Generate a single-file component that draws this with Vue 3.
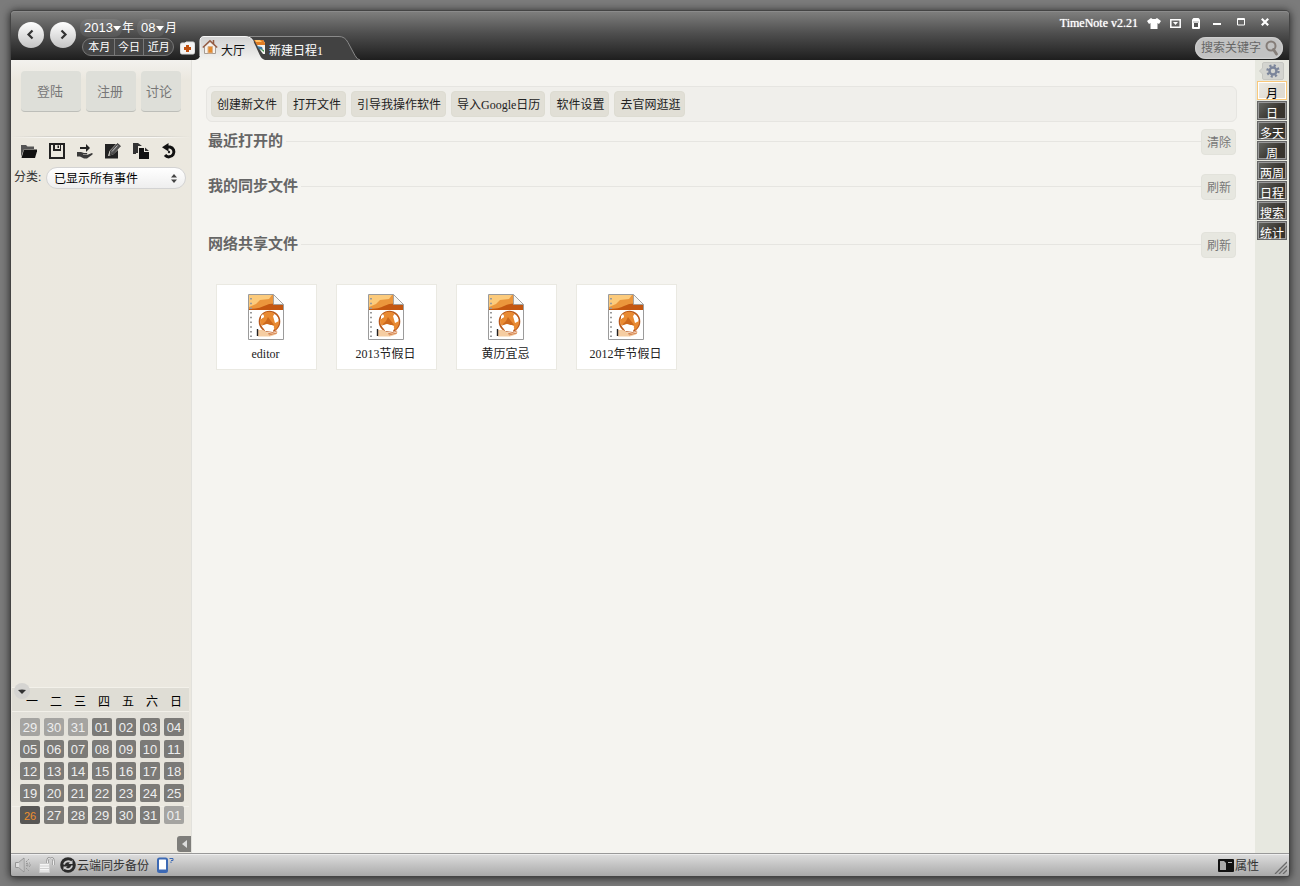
<script setup>
import { ref } from 'vue'

const weekdays = ['一', '二', '三', '四', '五', '六', '日']
const weeks = [
  ['29', '30', '31', '01', '02', '03', '04'],
  ['05', '06', '07', '08', '09', '10', '11'],
  ['12', '13', '14', '15', '16', '17', '18'],
  ['19', '20', '21', '22', '23', '24', '25'],
  ['26', '27', '28', '29', '30', '31', '01'],
]
const dayClass = (row, col) => ({
  outside: (row === 0 && col < 3) || (row === 4 && col === 6),
  today: row === 4 && col === 0,
})

const actions = ['创建新文件', '打开文件', '引导我操作软件', '导入Google日历', '软件设置', '去官网逛逛']
const files = ['editor', '2013节假日', '黄历宜忌', '2012年节假日']
const views = ['月', '日', '多天', '周', '两周', '日程', '搜索', '统计']
const activeView = ref('月')
const keyword = ref('')
</script>

<template>
  <div class="window">
    <header class="titlebar">
      <div class="nav">
        <button class="round" aria-label="上一月">
          <svg width="26" height="26" viewBox="0 0 26 26"><path d="M14.5 8.5 10.5 12.5l4 4" fill="none" stroke="#333" stroke-width="2.2" /></svg>
        </button>
        <button class="round" aria-label="下一月">
          <svg width="26" height="26" viewBox="0 0 26 26"><path d="M11.5 8.5 15.5 12.5l-4 4" fill="none" stroke="#333" stroke-width="2.2" /></svg>
        </button>
      </div>
      <div class="period">
        <div class="date">
          <span class="pick year">
            <select aria-label="年"><option>2013</option></select>
            <svg width="8" height="5" viewBox="0 0 8 5"><path d="M0 0h8L4 5z" fill="#fff" /></svg>
          </span>
          <span class="unit">年</span>
          <span class="pick month">
            <select aria-label="月"><option>08</option></select>
            <svg width="8" height="5" viewBox="0 0 8 5"><path d="M0 0h8L4 5z" fill="#fff" /></svg>
          </span>
          <span class="unit">月</span>
        </div>
        <div class="jump">
          <button>本月</button><button>今日</button><button>近月</button>
        </div>
      </div>
      <button class="add" aria-label="新建">
        <svg width="15" height="14" viewBox="0 0 15 14">
          <path d="M2 2h3l1-1h7q1.500 0 1.500 1.500v9q0 1.500-1.500 1.500H2Q.5 13 .5 11.500v-8Q.5 2 2 2z" fill="#f4f4f4" stroke="#ddd" />
          <path d="M6 4h3v2h2v3H9v2H6V9H4V6h2z" fill="#c05010" />
        </svg>
      </button>
      <nav class="tabs">
        <button class="tab active">
          <svg class="shape" width="70" height="24" viewBox="0 0 70 24">
            <defs><linearGradient id="tabLight" x1="0" y1="0" x2="0" y2="1"><stop offset="0" stop-color="#d2d2d2" /><stop offset="1" stop-color="#f2f2f0" /></linearGradient></defs>
            <path d="M0 24q5-1 5-5V5q0-4.500 4-4.500h41q6 0 8.500 5l6 13q2 4.500 5.500 5.500z" fill="url(#tabLight)" />
            <path d="M5 20V5q0-4.500 4-4.500h41q6 0 8.500 5" fill="none" stroke="#f6f6f6" />
          </svg>
          <svg class="ticon" width="16" height="16" viewBox="0 0 16 16">
            <path d="M2.500 7.500v7h11v-7L8 2.500z" fill="#f7f2ec" stroke="#a79d95" />
            <path d="M.8 8.500 8 1.800l7.200 6.700" fill="none" stroke="#955c43" stroke-width="1.500" />
            <path d="M11.500 1v4" stroke="#955c43" stroke-width="1.500" />
            <path d="M6 7.500h4.500v6.500H6z" fill="#e58a2c" stroke="#d9b18b" />
          </svg>
          <span>大厅</span>
        </button>
        <button class="tab second">
          <svg class="shape" width="112" height="24" viewBox="0 0 112 24">
            <path d="M0 .5h90q6 0 9 6l7 13q2 4 5 4.500H12z" fill="#424242" />
            <path d="M0 .5h90q6 0 9 6l7 13q2 4 5 4.500" fill="none" stroke="#8a8a8a" />
          </svg>
          <svg class="ticon" width="12" height="16" viewBox="0 0 12 16">
            <path d="M1 1h8l2 3v11H9L4 8z" fill="#f4f4f0" />
            <path d="M0 1h9l2 3v2H3z" fill="#df7c23" /><path d="M1 1h5l2 2H2z" fill="#ffc36b" />
            <path d="m3 7 5 1 1 3-4-1z" fill="#3c78a0" /><path d="m6 10 4 1v2z" fill="#4b9b55" />
          </svg>
          <span>新建日程1</span>
        </button>
      </nav>
      <div class="right">
        <div class="controls">
          <span class="app-name">TimeNote v2.21</span>
          <button class="shirt" aria-label="皮肤"><svg width="14" height="11" viewBox="0 0 14 11"><path d="m4 0 1.500 1h3L10 0l4 3-2 3-1.500-1v6h-7V5L2 6 0 3z" fill="#fff" /></svg></button>
          <button class="tray" aria-label="菜单"><svg width="11" height="9" viewBox="0 0 11 9"><path d="M.8.8h9.400v7.400H.8z" fill="none" stroke="#fff" stroke-width="1.500" /><path d="M3 3h5L5.500 6z" fill="#fff" /></svg></button>
          <button class="pin" aria-label="置顶"><svg width="8" height="11" viewBox="0 0 8 11"><path d="M1.500 0h5l1.500 1.500V10q0 1-1 1H1q-1 0-1-1V1.500z" fill="#fff" /><path d="M2 5h4v4H2z" fill="#555" /><path d="M1 4h6" stroke="#aaa" /></svg></button>
          <button class="min" aria-label="最小化"><svg width="8" height="10" viewBox="0 0 8 10"><path d="M0 5h8v2H0z" fill="#fff" /></svg></button>
          <button class="max" aria-label="最大化"><svg width="8" height="10" viewBox="0 0 8 10"><path d="M.5.500h7v6.500h-7zM0 1.500h8" fill="none" stroke="#fff" /></svg></button>
          <button class="close" aria-label="关闭"><svg width="8" height="10" viewBox="0 0 8 10"><path d="m.8.8 6.400 6.400m0-6.400L.8 7.200" stroke="#fff" stroke-width="2.200" /></svg></button>
        </div>
        <div class="search">
          <input v-model="keyword" type="text" placeholder="搜索关键字" aria-label="搜索关键字" />
          <svg width="14" height="16" viewBox="0 0 14 16"><circle cx="6" cy="6" r="4.500" fill="none" stroke="#857d78" stroke-width="2" /><path d="m8.500 9.500 3 4.500" stroke="#857d78" stroke-width="2.800" stroke-linecap="round" /></svg>
        </div>
      </div>
    </header>

    <div class="body">
      <aside class="sidebar">
        <div class="account">
          <button class="login">登陆</button>
          <button class="register">注册</button>
          <button class="discuss">讨论</button>
        </div>
        <div class="tools">
          <button aria-label="打开"><svg width="16" height="16" viewBox="0 0 16 16"><path d="M0 14V2h5l1.500 1.500H13V6H3z" fill="#555" /><path d="M3 6.500h13.500L14 15H.5z" fill="#111" /></svg></button>
          <button aria-label="保存"><svg width="16" height="16" viewBox="0 0 16 16"><path d="M0 0h16v16H0z" fill="#222" /><path d="M2 2h2v6h8V2h2v12H2zM6 2h5v4H6z" fill="#ebe8df" /><path d="M8.500 2.500h1.500v2.500H8.500z" fill="#222" /></svg></button>
          <button aria-label="共享"><svg width="16" height="16" viewBox="0 0 16 16"><path d="M3 4h6V1l4 4-4 4V6H3z" fill="#222" /><path d="M0 9h4l3 1h3q1 1.500-1 1.500H6v.5h4l5-2q1 0 .5 1.500L10 15.500H7l-4-2H0z" fill="#3a3a3a" /></svg></button>
          <button aria-label="编辑"><svg width="16" height="16" viewBox="0 0 16 16"><path d="M0 1h11L4.500 8 3 13l5-1.500L13 7v8.500H0z" fill="#222" /><path d="m5.500 8 7-7.500 3 2.500-7.500 8-3 1z" fill="#555" stroke="#222" stroke-width=".7" /><path d="m7 8.500 5.500-6" stroke="#ddd" stroke-width=".8" /></svg></button>
          <button aria-label="复制"><svg width="16" height="16" viewBox="0 0 16 16"><path d="M0 10V0h5l4 3h-4v7H3V4H1.500v6z" fill="#333" /><path d="M0 1h5v3H3v7H0z" fill="#333" /><path d="M6 5h5v4h5v7H6z" fill="#111" /><path d="m12 4.500 4 3.500h-4z" fill="#333" /></svg></button>
          <button aria-label="撤销"><svg width="16" height="16" viewBox="0 0 16 16"><path d="M5 4h4a5 5 0 1 1-5 8" fill="none" stroke="#111" stroke-width="3" /><path d="M7.500 0v8.500L1 4.200z" fill="#111" /><circle cx="8" cy="9" r="1.200" fill="#222" /></svg></button>
        </div>
        <div class="filter">
          <label for="category">分类:</label>
          <span class="select-box">
            <select id="category"><option>已显示所有事件</option></select>
            <svg width="6" height="9" viewBox="0 0 6 9"><path d="M0 3.500 3 0l3 3.500zM0 5.500 3 9l3-3.500z" fill="#444" /></svg>
          </span>
        </div>
        <div class="calendar">
          <button class="toggle" aria-label="收起日历"><svg width="8" height="5" viewBox="0 0 8 5"><path d="M0 1q4-1 8 0L4 5z" fill="#333" /></svg></button>
          <table>
            <thead><tr><th v-for="d in weekdays" :key="d" scope="col">{{ d }}</th></tr></thead>
            <tbody>
              <tr v-for="(week, r) in weeks" :key="r">
                <td v-for="(day, c) in week" :key="c" :class="dayClass(r, c)">{{ day }}</td>
              </tr>
            </tbody>
          </table>
          <button class="collapse" aria-label="收起侧栏"><svg width="5" height="8" viewBox="0 0 5 8"><path d="M5 0v8L0 4z" fill="#ddd" /></svg></button>
        </div>
      </aside>

      <main class="hall">
        <div class="actions">
          <button v-for="a in actions" :key="a">{{ a }}</button>
        </div>
        <section class="recent">
          <h2>最近打开的</h2><button>清除</button>
        </section>
        <section class="sync">
          <h2>我的同步文件</h2><button>刷新</button>
        </section>
        <section class="shared">
          <h2>网络共享文件</h2><button>刷新</button>
        </section>
        <div class="files">
          <button v-for="f in files" :key="f" class="file">
            <svg width="36" height="46" viewBox="0 0 36 46">
              <path d="M.5.500h25l10 10v35H.5z" fill="#fff" stroke="#9b9b9b" />
              <path d="M1 1h24.500l9.500 10v5H1z" fill="#eb963c" />
              <path d="M1 1h23l-3 4-9 1-4 4-7 3z" fill="#fccb7c" />
              <path d="M1 15q10 0 15-3 8-4 19-1.500V16H1z" fill="#c45710" />
              <path d="M25.500.500v10h10z" fill="#f6f6f3" stroke="#999" stroke-width=".8" />
              <path d="M3 4v40" stroke="#999" stroke-width="2" stroke-dasharray="1.500 3.200" />
              <circle cx="21.500" cy="27.500" r="10" fill="#fff" stroke="#ba591b" stroke-width="1.600" />
              <path d="M15 20q6-4.500 12 0l-2 2 2 7 4-2q0 6-4 9l-3-5-5-1-6 1q-1-2-1-5l2-2 2-1z" fill="#e98a32" />
              <path d="m20 23 6 8-5 0-3-1-5 2 5-5z" fill="#cc681d" />
              <path d="M26 20q4 2 4.500 6l-3-1zM13 22l2-2 1 3-3 2z" fill="#fff" />
              <path d="m15 33 4-3 7 2-1 6-8-1z" fill="#fff" />
              <path d="M10 36h5l4 2.500h8l3-1-2 3-6 2H10z" fill="#f5cda2" />
              <path d="m20 40 9-3m-8 4 8-2" stroke="#ce7341" stroke-width=".8" />
              <path d="M9.500 35v7" stroke="#222" stroke-width="1.400" />
            </svg>
            <span>{{ f }}</span>
          </button>
        </div>
      </main>

      <aside class="rail">
        <button class="gear" aria-label="设置">
          <svg width="26" height="18" viewBox="0 0 26 18">
            <path d="M5 .5h18q1.500 0 1.500 1.500v14q0 1.500-1.500 1.500H5q-1.500 0-1.500-1.500v-4L.5 9l3-3V2Q3.500.5 5 .5z" fill="#d3d4cf" stroke="#c6c7c2" />
            <circle cx="14" cy="9" r="5.500" fill="none" stroke="#7b859a" stroke-width="2.400" stroke-dasharray="2.100 2.220" />
            <circle cx="14" cy="9" r="3.500" fill="none" stroke="#7b859a" stroke-width="2.500" />
          </svg>
        </button>
        <button v-for="v in views" :key="v" class="view" :class="{ on: v === activeView }" @click="activeView = v">{{ v }}</button>
      </aside>
    </div>

    <footer class="status">
      <button class="sound" aria-label="声音"><svg width="17" height="16" viewBox="0 0 17 16"><path d="M.5 5.500h3L9 1v14l-5.500-4.500h-3z" fill="#ddd" stroke="#949494" /><path d="M5 4v8M7 3v10" stroke="#aaa" /><path d="m11 5 3-3m-2.500 6H16m-5 3 3 3m-3-7.500 4-.5m-4 2.500 4 1" stroke="#969696" stroke-dasharray="2 1" /></svg></button>
      <button class="lock" aria-label="锁定"><svg width="16" height="16" viewBox="0 0 16 16"><path d="M8.500 7V3.500q0-2.500 3-2.500t3 2.500V8" fill="none" stroke="#8e8e8e" stroke-width="2.200" /><path d="M8.500 7V3.500q0-2.500 3-2.500t3 2.500V8" fill="none" stroke="#eee" /><path d="M.5 6.500h10v9H.5z" fill="#f5f5f5" stroke="#ccc" /><path d="M1 9h9M1 11.500h9M1 14h9" stroke="#d0d0d0" /></svg></button>
      <button class="cloud">
        <svg width="16" height="16" viewBox="0 0 16 16"><circle cx="8" cy="8" r="7.800" fill="#2b2b2b" /><path d="M4 7.500a4.200 4.200 0 0 1 7.500-1.500M12 8.500A4.200 4.200 0 0 1 4.500 10.500" fill="none" stroke="#ccc" stroke-width="1.800" /><path d="M12.500 3v4h-4zM3.500 13V9.500h4z" fill="#ccc" /></svg>
        <span>云端同步备份</span>
      </button>
      <button class="phone" aria-label="手机版"><svg width="17" height="16" viewBox="0 0 17 16"><rect x="1" y="1.500" width="9" height="13.500" rx="1.500" fill="#fff" stroke="#3c69b4" stroke-width="2" /><path d="M1 13.500h9" stroke="#3c69b4" stroke-width="2" /><path d="M12.500 1.500h3.500v2h-2M14 4.500v1.500" fill="none" stroke="#3c69b4" /></svg></button>
      <button class="props">
        <svg width="16" height="13" viewBox="0 0 16 13"><rect width="16" height="13" rx="1" fill="#111" /><path d="M2 2h4l2 2v7H2z" fill="#aaa" /><path d="M10 3.500h4" stroke="#bbb" /></svg>
        <span>属性</span>
      </button>
      <svg class="grip" width="13" height="13" viewBox="0 0 13 13"><path d="M1 13 13 1M5 13l8-8M9 13l4-4" stroke="#6b6b6b" stroke-width="1.300" /></svg>
    </footer>
  </div>
</template>

<style>
html { background: #7b7b7b; }
</style>

<style scoped>
.window {
  display: flex;
  flex-direction: column;
  box-sizing: border-box;
  min-height: calc(100vh - 21px);
  margin: 11px 11px 10px;
  border-radius: 4px 4px 2px 2px;
  box-shadow: 0 0 0 1px #444, 0 1px 8px 1px #222;
  font: 12px/16px "Liberation Serif", "Noto Sans CJK SC", serif;
  color: #222;
}
button, input, select {
  box-sizing: border-box;
  margin: 0;
  padding: 0;
  border: 0;
  background: none;
  color: inherit;
  font: inherit;
  appearance: none;
}
svg { display: block; flex: none; }

.titlebar {
  display: flex;
  height: 49px;
  flex: none;
  border-radius: 4px 4px 0 0;
  background: linear-gradient(#80807f, #4f4f4f 45%, #1e1e1e);
  box-shadow: inset 0 1px #8b8b8b;
  color: #fff;
}
.nav { display: flex; gap: 6px; padding: 11px 0 0 7px; }
.round {
  width: 26px;
  height: 26px;
  border-radius: 50%;
  background: linear-gradient(#fff, #c4c4c4);
}
.period { width: 100px; padding: 8px 0 0 4px; }
.date { display: flex; align-items: center; height: 18px; font: 13px/18px "Liberation Sans", "Noto Sans CJK SC", sans-serif; }
.pick { display: flex; align-items: center; border-radius: 8px; background: rgba(255, 255, 255, .08); }
.year { width: 42px; }
.month { width: 28px; margin-left: 2px; }
.pick select { padding-left: 4px; height: 18px; width: 33px; }
.month select { width: 19px; }
.unit { width: 13px; font-size: 12px; }
.jump {
  display: flex;
  box-sizing: border-box;
  width: 92px;
  height: 18px;
  margin: 1px 0 0 2px;
  border: 1px solid #777;
  border-radius: 9px;
  background: #464646;
}
.jump button { flex: 1; font-size: 11px; line-height: 15px; }
.jump button:first-child { padding-left: 2px; }
.jump button + button { border-left: 1px solid #777; }
.add { align-self: flex-end; padding-bottom: 5px; }
.tabs { display: flex; align-self: flex-end; height: 24px; }
.tab { position: relative; display: flex; align-items: center; gap: 3px; height: 24px; padding-top: 6px; }
.tab .shape { position: absolute; left: 0; top: 0; }
.tab .ticon { position: relative; margin-top: -9px; }
.tab span { position: relative; }
.active { z-index: 1; width: 58px; padding-left: 7px; color: #111; }
.second { width: 110px; padding-left: 1px; gap: 3px; }
.second .shape { left: -4px; }
.second .ticon { z-index: 2; }
.right { display: flex; flex-direction: column; align-items: flex-end; margin-left: auto; padding: 4px 6px 0 0; }
.controls { display: flex; align-items: center; height: 16px; margin-right: 14px; }
.app-name { margin-right: 9px; text-shadow: 0 0 1px #fff; }
.shirt, .tray { margin-right: 9px; }
.tray { margin-right: 11px; }
.pin { margin-right: 13px; }
.min, .max { margin-right: 16px; }
.search {
  display: flex;
  align-items: center;
  box-sizing: border-box;
  width: 88px;
  height: 22px;
  margin-top: 6px;
  padding: 0 4px 0 6px;
  border-radius: 11px;
  background: #c2c2c2;
  box-shadow: inset 0 0 2px #eee;
}
.search input { flex: 1; min-width: 0; height: 20px; outline: 0; color: #555; }
.search input::placeholder { color: #666; opacity: 1; }

.body { display: flex; flex: 1; background: #f5f4f0; }
.sidebar {
  display: flex;
  flex-direction: column;
  flex: none;
  box-sizing: border-box;
  width: 181px;
  border-right: 1px solid #e2e1dc;
  background: linear-gradient(#f3f2ee, #ebe8df 20px, #ebe8e0);
}
.account { display: flex; gap: 5px; padding: 11px 0 0 10px; }
.account button {
  height: 41px;
  padding-top: 2px;
  border-radius: 4px;
  background: #dedfd9;
  border-bottom: 1px solid #bdbeb9;
  color: #777;
  font-size: 13px;
}
.login { width: 60px; padding-right: 2px; }
.register { width: 50px; padding-right: 2px; }
.discuss { width: 40px; padding-right: 4px; }
.tools {
  display: flex;
  gap: 12px;
  margin-top: 24px;
  padding: 7px 0 0 10px;
  background: linear-gradient(90deg, transparent, #d4d2cc 20%, #d4d2cc 80%, transparent) top / 100% 1px no-repeat,
    linear-gradient(90deg, transparent, #f9f8f5 20%, #f9f8f5 80%, transparent) 0 1px / 100% 1px no-repeat;
}
.filter { display: flex; align-items: center; gap: 4px; margin-top: 8px; padding-left: 3px; }
.filter label { width: 28px; margin-top: -2px; white-space: nowrap; color: #333; }
.select-box { position: relative; display: flex; align-items: center; }
.select-box select {
  width: 140px;
  height: 22px;
  padding: 2px 20px 0 7px;
  border: 1px solid #d3d3d3;
  border-radius: 11px;
  background: linear-gradient(#fff, #eee);
  color: #000;
}
.select-box svg { position: absolute; right: 9px; }
.calendar {
  position: relative;
  margin: auto 2px 0 1px;
  padding-bottom: 25px;
  border-top: 1px solid #f3f1ea;
  background: linear-gradient(#dfddd5 0, #dfddd5 23px, #f2f0e9 23px, #f2f0e9 24px, #e2e0d9 24px, #ebe8df 118px, #f2f0e9 118px, #f2f0e9 119px, transparent 119px);
}
.toggle {
  position: absolute;
  left: 2px;
  top: -5px;
  display: grid;
  place-items: center;
  width: 16px;
  height: 16px;
  border-radius: 50%;
  background: #d5d4d1;
}
table { margin-left: 4px; border-spacing: 4px; table-layout: fixed; width: 172px; }
th { height: 22px; padding: 0 0 3px 4px; box-sizing: border-box; font-weight: normal; color: #000; line-height: 18px; }
td {
  box-sizing: border-box;
  height: 18px;
  padding: 2px 0 0;
  border-radius: 2px;
  background: #7b7a77;
  color: #eee;
  font: 13px/16px "Liberation Sans", sans-serif;
  text-align: center;
}
td.outside { background: #a5a4a1; }
td.today { background: #585755; color: #ee8f2e; font-size: 11px; }
.collapse {
  position: absolute;
  right: -2px;
  bottom: 1px;
  display: grid;
  place-items: center;
  width: 14px;
  height: 16px;
  border-radius: 3px 0 0 3px;
  background: #7e7d7a;
}

.hall { flex: 1; min-width: 0; padding: 26px 18px 0 14px; }
.actions {
  display: flex;
  gap: 5px;
  padding: 4px;
  border: 1px solid #e6e5e1;
  border-radius: 6px;
  background: #f0efeb;
}
.actions button, section button {
  height: 26px;
  padding: 2px 4px 0 5px;
  border: 1px solid #dddcd2;
  border-radius: 4px;
  background: #e1dfd6;
  white-space: nowrap;
}
section { display: flex; align-items: center; height: 26px; padding: 0 1px 0 2px; }
section h2 + button { width: 35px; border-color: #e2e2db; background: #e7e7e0; color: #777; }
section h2 { display: flex; flex: 1; align-items: center; gap: 3px; margin: 0 0 2px; font-size: 15px; line-height: 22px; color: #666; }
section h2::after { content: ""; flex: 1; height: 1px; background: #e6e5e1; }
.recent { margin-top: 7px; }
.sync { margin-top: 19px; }
.shared { margin-top: 32px; }
.files { display: flex; flex-wrap: wrap; gap: 19px; padding: 26px 10px; }
.file {
  display: flex;
  flex-direction: column;
  align-items: center;
  gap: 6px;
  width: 101px;
  height: 86px;
  padding: 9px 2px 0 0;
  border: 1px solid #eae9e2;
  background: #fff;
}

.rail { display: flex; flex-direction: column; flex: none; gap: 1px; width: 34px; box-sizing: border-box; padding: 2px 2px 0; background: #e7e8e0; }
.gear { align-self: center; }
.view {
  height: 19px;
  padding-top: 4px;
  overflow: hidden;
  border: 1px solid #666;
  background: linear-gradient(135deg, #666863, #38342e 60%);
  box-shadow: inset 0 0 0 1px #999;
  color: #fff;
  line-height: 16px;
}
.view.on { border-color: #f9c87b; background: linear-gradient(135deg, #eeece5, #e0dcd3 60%); box-shadow: inset 0 0 0 1px #fff; color: #000; }

.status {
  display: flex;
  align-items: center;
  flex: none;
  box-sizing: border-box;
  height: 23px;
  padding: 0 2px 0 4px;
  border-top: 1px solid #999;
  border-radius: 0 0 2px 2px;
  background: linear-gradient(#dedede, #a9a9a9);
  box-shadow: inset 0 1px #eee;
}
.lock { margin: 0 5px 0 7px; }
.cloud, .props { display: flex; align-items: center; gap: 1px; color: #333; }
.cloud span, .props span { padding-top: 2px; }
.phone { margin-left: 8px; }
.props { margin-left: auto; }
.grip { align-self: flex-end; margin: 0 0 2px 15px; }
</style>
